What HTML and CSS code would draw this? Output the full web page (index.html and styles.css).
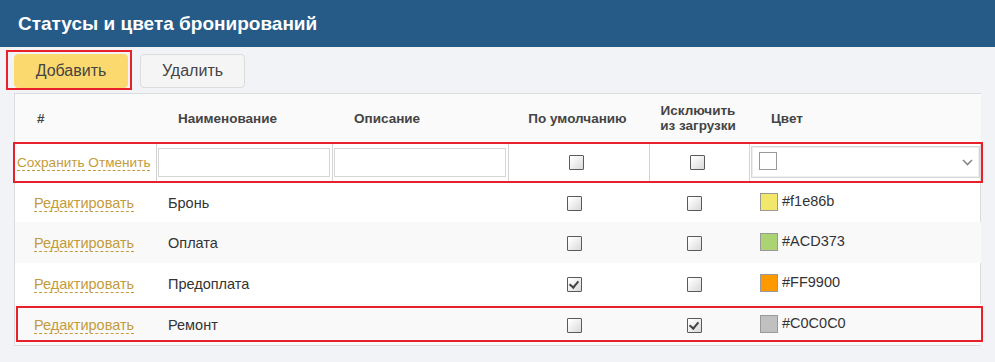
FILE: index.html
```html
<!DOCTYPE html>
<html lang="ru">
<head>
    <meta charset="UTF-8">
    <meta name="viewport" content="width=device-width, initial-scale=1.0">
    <title>Статусы и цвета бронирований</title>
    <link rel="stylesheet" href="styles.css">
</head>
<body>
    <div class="page-head">
        <h1>Статусы и цвета бронирований</h1>
    </div>

    <div class="toolbar">
        <button class="btn btn-add marked">Добавить</button>
        <button class="btn">Удалить</button>
    </div>

    <div class="panel">
        <table class="status-table">
            <colgroup>
                <col style="width: 141px">
                <col style="width: 176px">
                <col style="width: 176px">
                <col style="width: 141px">
                <col style="width: 100px">
                <col style="width: 232px">
            </colgroup>
            <thead>
                <tr>
                    <th>#</th>
                    <th>Наименование</th>
                    <th>Описание</th>
                    <th class="center">По умолчанию</th>
                    <th class="center">Исключить<br>из загрузки</th>
                    <th>Цвет</th>
                </tr>
            </thead>
            <tbody>
                <tr class="edit-row marked-row">
                    <td class="actions"><a href="#" class="link">Сохранить</a> <a href="#" class="link">Отменить</a></td>
                    <td><input type="text" class="field"></td>
                    <td><input type="text" class="field"></td>
                    <td class="center"><input type="checkbox" class="check"></td>
                    <td class="center"><input type="checkbox" class="check"></td>
                    <td>
                        <div class="color-select">
                            <span class="swatch swatch-empty"></span>
                            <svg class="chevron" width="11" height="7" viewBox="0 0 11 7"><path d="M1 1l4.5 4.5L10 1" fill="none" stroke="#888" stroke-width="1.6"/></svg>
                        </div>
                    </td>
                </tr>
                <tr class="first-row">
                    <td class="first"><a href="#" class="link">Редактировать</a></td>
                    <td>Бронь</td>
                    <td></td>
                    <td class="center"><input type="checkbox" class="check"></td>
                    <td class="center"><input type="checkbox" class="check"></td>
                    <td><span class="swatch" style="background: #f1e86b"></span>#f1e86b</td>
                </tr>
                <tr class="striped">
                    <td class="first"><a href="#" class="link">Редактировать</a></td>
                    <td>Оплата</td>
                    <td></td>
                    <td class="center"><input type="checkbox" class="check"></td>
                    <td class="center"><input type="checkbox" class="check"></td>
                    <td><span class="swatch" style="background: #ACD373"></span>#ACD373</td>
                </tr>
                <tr>
                    <td class="first"><a href="#" class="link">Редактировать</a></td>
                    <td>Предоплата</td>
                    <td></td>
                    <td class="center"><input type="checkbox" class="check" checked></td>
                    <td class="center"><input type="checkbox" class="check"></td>
                    <td><span class="swatch" style="background: #FF9900"></span>#FF9900</td>
                </tr>
                <tr class="striped marked-row last-mark">
                    <td class="first"><a href="#" class="link">Редактировать</a></td>
                    <td>Ремонт</td>
                    <td></td>
                    <td class="center"><input type="checkbox" class="check"></td>
                    <td class="center"><input type="checkbox" class="check" checked></td>
                    <td><span class="swatch" style="background: #C0C0C0"></span>#C0C0C0</td>
                </tr>
            </tbody>
        </table>
    </div>
</body>
</html>
```

FILE: styles.css
```css
body {
    font-family: Arial, "Liberation Sans", sans-serif;
    margin: 0;
    background-color: #f2f3f7;
    color: #333;
}
.page-head {
    background-color: #265a87;
    height: 47px;
    display: flex;
    align-items: center;
    padding-left: 18px;
}
.page-head h1 {
    margin: 0;
    color: #fff;
    font-size: 19px;
    font-weight: bold;
}
.toolbar {
    display: flex;
    gap: 12px;
    padding: 7px 14px 5px;
}
.btn {
    height: 34px;
    width: 105px;
    font-family: inherit;
    font-size: 16px;
    color: #444;
    background-color: #f5f5f6;
    border: 1px solid #dcdcdc;
    border-radius: 4px;
    cursor: pointer;
}
.btn-add {
    width: 114px;
    background-color: #fcd96e;
    border-color: #fcd96e;
}
.marked {
    position: relative;
}
.marked::after {
    content: "";
    position: absolute;
    top: -5px;
    right: -5px;
    bottom: -3px;
    left: -9px;
    border: 2px solid #e8202a;
    pointer-events: none;
}
.panel {
    margin: 0 14px;
    background: #fff;
    border: 1px solid #dcdcdc;
}
.status-table {
    width: 100%;
    border-collapse: collapse;
    table-layout: fixed;
    font-size: 14.5px;
}
.status-table th {
    background-color: #fafafa;
    font-size: 13.5px;
    font-weight: bold;
    color: #444;
    text-align: left;
    padding: 0 22px;
    height: 48px;
    line-height: 15px;
}
.status-table td {
    height: 41px;
    padding: 0 12px;
    vertical-align: middle;
}
.status-table .center {
    text-align: center;
    padding: 0 9px 0 0;
}
.status-table th.center {
    padding: 0 2px 0 0;
}
.status-table td.first {
    padding-left: 19px;
}
.first-row td {
    height: 39px;
}
.striped td {
    background-color: #f9f9f9;
}
.link {
    color: #c49b3c;
    text-decoration: none;
    border-bottom: 1px dashed #c49b3c;
}
.edit-row td {
    height: 40px;
    padding: 0 2px 0 1px;
    border-right: 1px solid #d4d4d4;
    border-bottom: 1px solid #d4d4d4;
}
.edit-row td.center {
    padding: 0 4px 0 0;
}
.edit-row td:last-child {
    border-right: none;
}
.edit-row td.actions {
    padding: 0 0 0 2px;
    font-size: 13.6px;
    white-space: nowrap;
}
.field {
    display: block;
    width: 100%;
    height: 29px;
    box-sizing: border-box;
    border: 1px solid #d6d6d6;
    margin: 0;
}
.marked-row {
    position: relative;
}
.marked-row::after {
    content: "";
    position: absolute;
    top: 0;
    left: -2px;
    right: -2px;
    bottom: 0;
    border: 2px solid #e8202a;
    pointer-events: none;
}
.last-mark::after {
    top: 2px;
    left: 1px;
    bottom: 3px;
}
.check {
    appearance: none;
    -webkit-appearance: none;
    width: 15px;
    height: 15px;
    margin: 0;
    vertical-align: middle;
    border: 1.5px solid #5a5a5a;
    border-radius: 1px;
    background: linear-gradient(135deg, #ffffff 10%, #d9d9d9 100%);
    position: relative;
}
.check:checked::after {
    content: "";
    position: absolute;
    left: 3px;
    top: 1px;
    width: 4px;
    height: 7px;
    border: solid #444;
    border-width: 0 2px 2px 0;
    transform: rotate(40deg);
}
.swatch {
    display: inline-block;
    width: 16px;
    height: 16px;
    border: 1px solid #999;
    vertical-align: middle;
    margin-right: 4px;
    position: relative;
    top: -1px;
}
.status-table td:last-child {
    padding-left: 11px;
}
.color-select {
    height: 32px;
    box-sizing: border-box;
    border: 1px solid #d6d6d6;
    box-shadow: inset 0 0 0 1px #eee;
    display: flex;
    align-items: center;
    justify-content: space-between;
    padding: 0 6px 0 7px;
    margin-right: -1px;
}
.edit-row td:last-child {
    padding-left: 1px;
}
.swatch-empty {
    background: #fff;
    margin: 0;
}
.chevron {
    display: block;
}
```
